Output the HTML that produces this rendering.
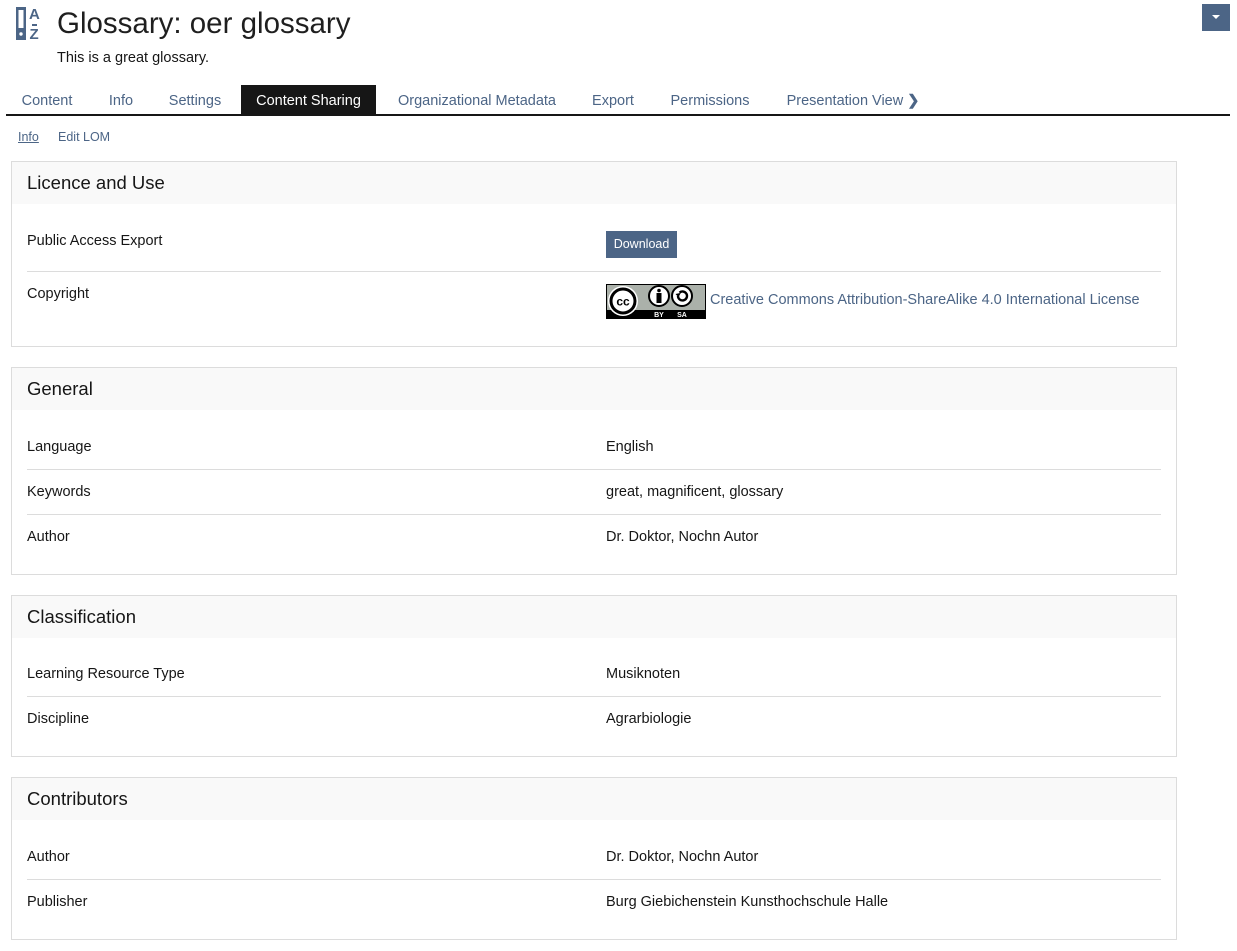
<!DOCTYPE html>
<html><head><meta charset="utf-8">
<style>
*{margin:0;padding:0;box-sizing:border-box}
body{width:1237px;height:951px;background:#fff;font-family:"Liberation Sans",sans-serif;color:#161616;position:relative;overflow:hidden;font-size:14px}
.a{position:absolute;white-space:nowrap;line-height:1}
.tab{position:absolute;top:85px;height:29px;line-height:33px;font-size:14.5px;color:#4c6586;text-align:center}
.panel{position:absolute;left:11px;width:1166px;border:1px solid #dcdcdc;background:#fff}
.ph{height:42px;background:#f9f9f9;padding-left:15px;line-height:42px;font-size:18.5px;color:#161616}
.hr{position:absolute;left:15px;right:15px;height:1px;background:#dcdcdc}
.lk{color:#4c6586}
</style></head><body>
<svg class="a" style="left:15px;top:5px" width="28" height="36" viewBox="0 0 28 36">
<rect x="1" y="2" width="10" height="33" fill="#4c6586"/>
<rect x="3.5" y="5" width="5" height="18" fill="#fff"/>
<circle cx="6" cy="29" r="1.7" fill="#fff"/>
<text x="14" y="14" font-family="Liberation Sans" font-weight="bold" font-size="15" fill="#4c6586">A</text>
<rect x="17" y="19" width="5" height="2" fill="#4c6586"/>
<text x="14.5" y="34" font-family="Liberation Sans" font-weight="bold" font-size="15" fill="#4c6586">Z</text>
</svg>
<div class="a" style="left:57px;top:9px;font-size:29.5px;color:#1f1f1f">Glossary: oer glossary</div>
<div class="a" style="left:57px;top:51px;font-size:14.5px">This is a great glossary.</div>
<div class="a" style="left:1202px;top:4px;width:28px;height:27px;background:#4c6586"></div>
<div class="a" style="left:1212px;top:15px;width:0;height:0;border-left:4px solid transparent;border-right:4px solid transparent;border-top:4px solid #fff"></div>

<div class="tab" style="left:6px;width:82px">Content</div>
<div class="tab" style="left:92px;width:58px">Info</div>
<div class="tab" style="left:155px;width:80px">Settings</div>
<div class="tab" style="left:241px;width:135px;background:#161616;color:#fff">Content Sharing</div>
<div class="tab" style="left:382px;width:190px">Organizational Metadata</div>
<div class="tab" style="left:580px;width:66px">Export</div>
<div class="tab" style="left:655px;width:110px">Permissions</div>
<div class="tab" style="left:778px;width:150px">Presentation View <b>&#x276F;</b></div>
<div class="a" style="left:6px;top:114px;width:1224px;height:2px;background:#161616"></div>

<div class="a" style="left:18px;top:131px;font-size:12.5px;color:#4c6586;text-decoration:underline">Info</div>
<div class="a" style="left:58px;top:131px;font-size:12.5px;color:#4c6586">Edit LOM</div>

<div class="panel" style="top:161px;height:186px">
<div class="ph">Licence and Use</div>
<div class="a" style="left:15px;top:72px;font-size:14.5px">Public Access Export</div>
<div class="a" style="left:594px;top:69px;width:71px;height:27px;background:#4c6586;color:#fff;font-size:12.5px;line-height:27px;text-align:center">Download</div>
<div class="hr" style="top:109px"></div>
<div class="a" style="left:15px;top:125px;font-size:14.5px">Copyright</div>
<svg class="a" style="left:594px;top:122px" width="100" height="35" viewBox="0 0 100 35">
<rect width="100" height="35" fill="#000"/><rect x="1" y="1" width="98" height="25" fill="#abb1aa"/>
<circle cx="17" cy="17" r="15" fill="#fff"/><circle cx="17" cy="17" r="12" fill="none" stroke="#000" stroke-width="3"/>
<text x="17" y="21.5" text-anchor="middle" font-family="Liberation Sans" font-weight="bold" font-size="12">cc</text>
<circle cx="53" cy="12" r="10" fill="#fff" stroke="#000" stroke-width="2"/>
<circle cx="53" cy="6.5" r="1.8" fill="#000"/><rect x="50.5" y="9" width="5" height="10" fill="#000"/>
<circle cx="76" cy="12" r="10" fill="#fff" stroke="#000" stroke-width="2"/>
<path d="M72 12a4.5 4.5 0 1 0 1.5-3.4" fill="none" stroke="#000" stroke-width="2.4"/><path d="M69.5 10l3 3.2 2.3-4.3z" fill="#000"/>
<text x="53" y="33" text-anchor="middle" font-family="Liberation Sans" font-weight="bold" font-size="7" fill="#fff">BY</text>
<text x="76" y="33" text-anchor="middle" font-family="Liberation Sans" font-weight="bold" font-size="7" fill="#fff">SA</text>
</svg>
<div class="a lk" style="left:698px;top:131px;font-size:14.5px">Creative Commons Attribution-ShareAlike 4.0 International License</div>
</div>

<div class="panel" style="top:367px;height:208px">
<div class="ph">General</div>
<div class="a" style="left:15px;top:72px;font-size:14.5px">Language</div><div class="a" style="left:594px;top:72px;font-size:14.5px">English</div>
<div class="hr" style="top:101px"></div>
<div class="a" style="left:15px;top:117px;font-size:14.5px">Keywords</div><div class="a" style="left:594px;top:117px;font-size:14.5px">great, magnificent, glossary</div>
<div class="hr" style="top:146px"></div>
<div class="a" style="left:15px;top:162px;font-size:14.5px">Author</div><div class="a" style="left:594px;top:162px;font-size:14.5px">Dr. Doktor, Nochn Autor</div>
</div>

<div class="panel" style="top:595px;height:162px">
<div class="ph">Classification</div>
<div class="a" style="left:15px;top:71px;font-size:14.5px">Learning Resource Type</div><div class="a" style="left:594px;top:71px;font-size:14.5px">Musiknoten</div>
<div class="hr" style="top:100px"></div>
<div class="a" style="left:15px;top:116px;font-size:14.5px">Discipline</div><div class="a" style="left:594px;top:116px;font-size:14.5px">Agrarbiologie</div>
</div>

<div class="panel" style="top:777px;height:163px">
<div class="ph">Contributors</div>
<div class="a" style="left:15px;top:72px;font-size:14.5px">Author</div><div class="a" style="left:594px;top:72px;font-size:14.5px">Dr. Doktor, Nochn Autor</div>
<div class="hr" style="top:101px"></div>
<div class="a" style="left:15px;top:117px;font-size:14.5px">Publisher</div><div class="a" style="left:594px;top:117px;font-size:14.5px">Burg Giebichenstein Kunsthochschule Halle</div>
</div>
</body></html>
